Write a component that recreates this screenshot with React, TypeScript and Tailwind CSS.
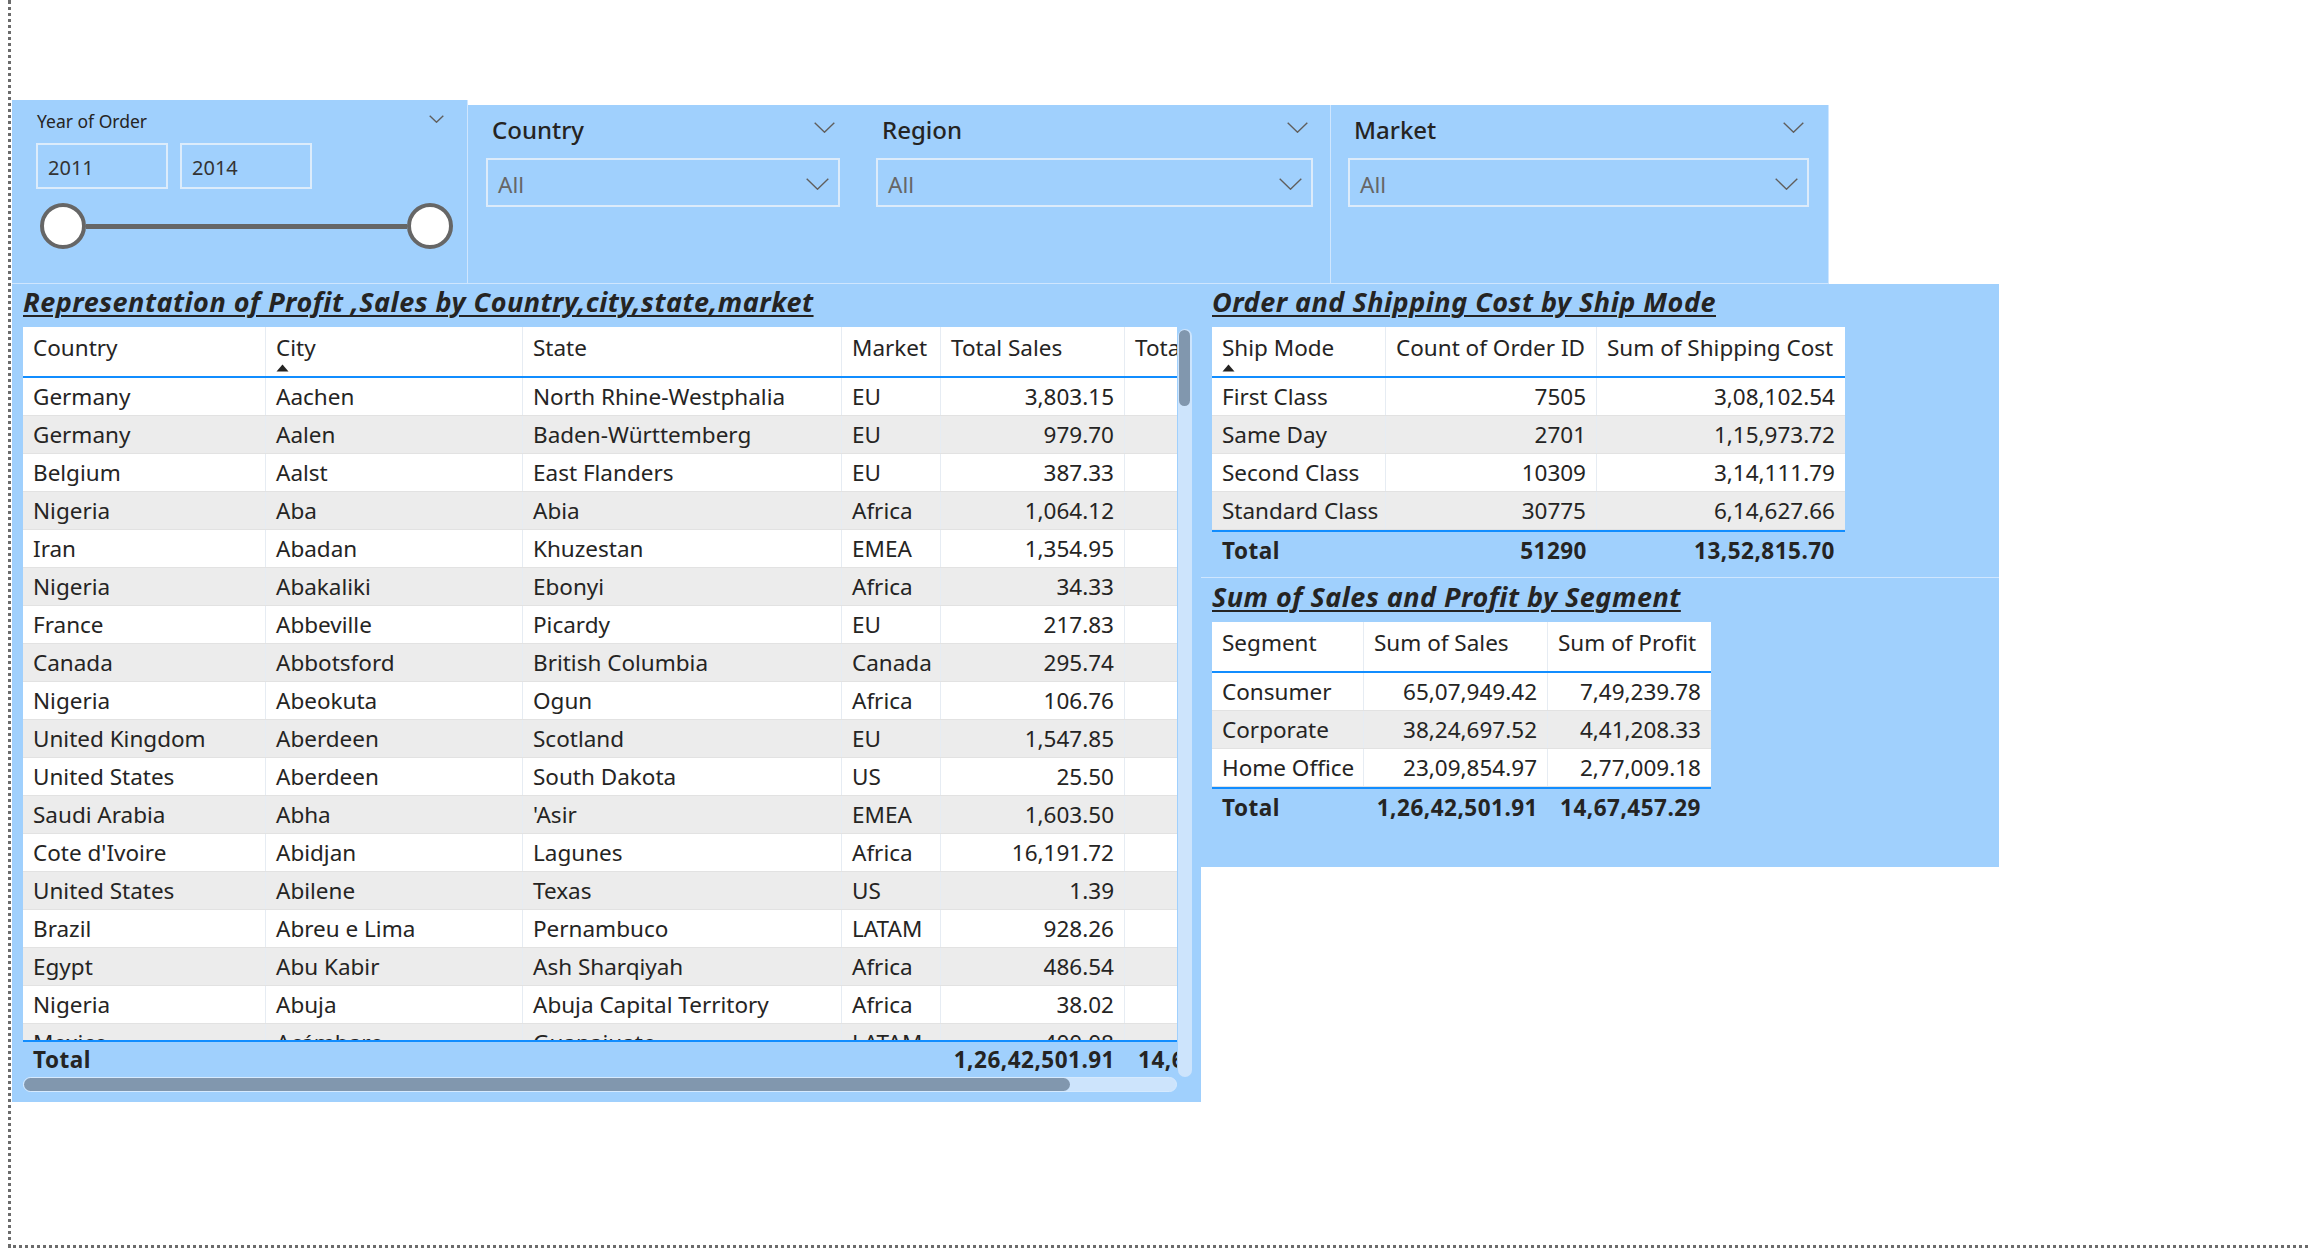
import React from "react";

type Row = [string, string, string, string, string];

const ROWS: Row[] = [
  ["Germany", "Aachen", "North Rhine-Westphalia", "EU", "3,803.15"],
  ["Germany", "Aalen", "Baden-Württemberg", "EU", "979.70"],
  ["Belgium", "Aalst", "East Flanders", "EU", "387.33"],
  ["Nigeria", "Aba", "Abia", "Africa", "1,064.12"],
  ["Iran", "Abadan", "Khuzestan", "EMEA", "1,354.95"],
  ["Nigeria", "Abakaliki", "Ebonyi", "Africa", "34.33"],
  ["France", "Abbeville", "Picardy", "EU", "217.83"],
  ["Canada", "Abbotsford", "British Columbia", "Canada", "295.74"],
  ["Nigeria", "Abeokuta", "Ogun", "Africa", "106.76"],
  ["United Kingdom", "Aberdeen", "Scotland", "EU", "1,547.85"],
  ["United States", "Aberdeen", "South Dakota", "US", "25.50"],
  ["Saudi Arabia", "Abha", "'Asir", "EMEA", "1,603.50"],
  ["Cote d'Ivoire", "Abidjan", "Lagunes", "Africa", "16,191.72"],
  ["United States", "Abilene", "Texas", "US", "1.39"],
  ["Brazil", "Abreu e Lima", "Pernambuco", "LATAM", "928.26"],
  ["Egypt", "Abu Kabir", "Ash Sharqiyah", "Africa", "486.54"],
  ["Nigeria", "Abuja", "Abuja Capital Territory", "Africa", "38.02"],
  ["Mexico", "Acámbaro", "Guanajuato", "LATAM", "400.08"],
];

const SHIP = [
  ["First Class", "7505", "3,08,102.54"],
  ["Same Day", "2701", "1,15,973.72"],
  ["Second Class", "10309", "3,14,111.79"],
  ["Standard Class", "30775", "6,14,627.66"],
];

const SEGMENTS = [
  ["Consumer", "65,07,949.42", "7,49,239.78"],
  ["Corporate", "38,24,697.52", "4,41,208.33"],
  ["Home Office", "23,09,854.97", "2,77,009.18"],
];

// country | city | state | market | sales | profit (profit runs past the clip)
const MAIN_COLS = "grid grid-cols-[243px_257px_319px_99px_184px_164px]";

function Chevron({ w, h }: { w: number; h: number }) {
  return (
    <svg width={w} height={h} viewBox={`0 0 ${w} ${h}`} className="block shrink-0">
      <path d={`M0.7 0.7 L${w / 2} ${h - 0.8} L${w - 0.7} 0.7`} fill="none" stroke="#605e5c" strokeWidth="1.4" />
    </svg>
  );
}

function SortArrow() {
  return (
    <svg width="13" height="8" viewBox="0 0 13 8" className="mt-[1px] block">
      <path d="M6.5 0.5 L12.5 7.5 L0.5 7.5 Z" fill="#252423" />
    </svg>
  );
}

function DropSlicer({ title, className }: { title: string; className: string }) {
  return (
    <div className={className}>
      <div className="flex h-[40px] justify-between pt-[10px]">
        <span className="ml-[6px] text-[24px] font-medium leading-[30px] text-[#252423]">{title}</span>
        <span className="mr-[5px] mt-[7px]">
          <Chevron w={21} h={11} />
        </span>
      </div>
      <div className="mt-[13px] flex h-[49px] items-center justify-between border-2 border-[#dcebfa] pl-[10px] pr-[9px]">
        <span className="pt-[4px] text-[22.5px] leading-[30px] text-[#666666]">All</span>
        <span className="pt-[2px]">
          <Chevron w={23} h={12} />
        </span>
      </div>
    </div>
  );
}

function VisualTitle({ text, className }: { text: string; className: string }) {
  return (
    <div className={className}>
      <span className="whitespace-nowrap text-[27px] font-bold italic leading-[32px] tracking-[0.5px] text-[#252423] underline decoration-[2px] underline-offset-[3px]">
        {text}
      </span>
    </div>
  );
}

function SummaryTable({
  cols,
  width,
  headers,
  rows,
  total,
  sortFirst,
}: {
  cols: string;
  width: string;
  headers: string[];
  rows: string[][];
  total: string[];
  sortFirst?: boolean;
}) {
  return (
    <div className={width}>
      <div className={`${cols} h-[51px] border-b-2 border-[#118dff] bg-white`}>
        {headers.map((h, i) => (
          <div key={h} className="whitespace-nowrap border-r border-[#e6ecf3] px-[10px] pt-[6px] last:border-r-0">
            <div className="leading-[30px]">{h}</div>
            {sortFirst && i === 0 && <SortArrow />}
          </div>
        ))}
      </div>
      {rows.map((r, i) => (
        <div
          key={r[0]}
          className={`${cols} h-[38px] border-b border-[#e2e2e2] last:border-b-0 ${i % 2 ? "bg-[#ececec]" : "bg-white"}`}
        >
          {r.map((c, j) => (
            <div
              key={j}
              className={`flex items-center whitespace-nowrap border-r border-[#e6ecf3] px-[10px] last:border-r-0 ${j > 0 ? "justify-end" : ""}`}
            >
              {c}
            </div>
          ))}
        </div>
      ))}
      <div className={`${cols} h-[40px] border-t-2 border-[#118dff] font-bold tracking-[0.5px]`}>
        {total.map((c, j) => (
          <div key={j} className={`flex items-center whitespace-nowrap px-[10px] ${j > 0 ? "justify-end" : ""}`}>
            {c}
          </div>
        ))}
      </div>
    </div>
  );
}

export default function App() {
  return (
    <div className="h-[1252px] w-[2308px] overflow-hidden bg-white font-['Noto_Sans',sans-serif] text-[22.5px] text-[#252423]">
      <div className="ml-[8px] h-[1248px] border-b-[3px] border-l-[3px] border-dotted border-[#6b6b6b] pl-[1px] pt-[100px]">
        {/* slicers */}
        <div className="flex items-start">
          <div className="h-[184px] w-[456px] border-b border-r border-[#cfe6fe] bg-[#a0d0fd]">
            <div className="flex h-[33px] justify-between pl-[25px] pr-[23px] pt-[9px]">
              <span className="text-[17.5px] leading-[24px]">Year of Order</span>
              <span className="mt-[6px]">
                <Chevron w={15} h={8} />
              </span>
            </div>
            <div className="ml-[24px] mt-[10px] flex gap-[12px]">
              {["2011", "2014"].map((y) => (
                <div key={y} className="flex h-[46px] w-[132px] items-center border-2 border-[#dcecfb] pl-[10px] pt-[3px] text-[20px] text-[#333333]">
                  {y}
                </div>
              ))}
            </div>
            <div className="ml-[28px] mt-[14px] flex w-[413px] items-center">
              <div className="h-[46px] w-[46px] shrink-0 rounded-full border-[4px] border-[#666666] bg-white" />
              <div className="h-[5px] flex-1 bg-[#666666]" />
              <div className="h-[46px] w-[46px] shrink-0 rounded-full border-[4px] border-[#666666] bg-white" />
            </div>
          </div>

          <div className="mt-[5px] flex h-[179px] w-[1361px] border-b border-r border-[#cfe6fe] bg-[#a0d0fd]">
            <DropSlicer title="Country" className="w-[390px] px-[18px]" />
            <DropSlicer title="Region" className="w-[473px] border-r border-[#cfe6fe] pl-[18px] pr-[17px]" />
            <DropSlicer title="Market" className="flex-1 pl-[17px] pr-[19px]" />
          </div>
        </div>

        <div className="flex items-start">
          {/* main table */}
          <div className="h-[818px] w-[1189px] bg-[#a0d0fd] pl-[11px]">
            <VisualTitle text="Representation of Profit ,Sales by Country,city,state,market" className="h-[43px] pt-[2px]" />
            <div className="flex items-start">
              <div className="w-[1154px] overflow-hidden">
                <div className={`${MAIN_COLS} h-[51px] border-b-2 border-[#118dff] bg-white`}>
                  {["Country", "City", "State", "Market", "Total Sales", "Total Profit"].map((h) => (
                    <div key={h} className="whitespace-nowrap border-r border-[#e6ecf3] px-[10px] pt-[6px]">
                      <div className="leading-[30px]">{h}</div>
                      {h === "City" && <SortArrow />}
                    </div>
                  ))}
                </div>
                <div className="h-[662px] overflow-hidden">
                  {ROWS.map((r, i) => (
                    <div
                      key={i}
                      className={`${MAIN_COLS} h-[38px] border-b border-[#e2e2e2] ${i % 2 ? "bg-[#ececec]" : "bg-white"}`}
                    >
                      {r.map((c, j) => (
                        <div
                          key={j}
                          className={`flex items-center whitespace-nowrap border-r border-[#e6ecf3] px-[10px] ${j === 4 ? "justify-end" : ""}`}
                        >
                          {c}
                        </div>
                      ))}
                      <div className="border-r border-[#e6ecf3]" />
                    </div>
                  ))}
                </div>
                <div className={`${MAIN_COLS} h-[37px] border-t-2 border-[#118dff] font-bold tracking-[0.5px]`}>
                  <div className="flex items-center px-[10px]">Total</div>
                  <div />
                  <div />
                  <div />
                  <div className="flex items-center justify-end px-[10px]">1,26,42,501.91</div>
                  <div className="flex items-center justify-end whitespace-nowrap px-[10px]">14,67,457.29</div>
                </div>
                <div className="h-[15px] rounded-full border border-[#d6eafe] bg-[#cde4fc]">
                  <div className="h-full w-[1046px] rounded-full bg-[#8197ae]" />
                </div>
              </div>
              <div className="ml-[1px] mt-[2px] h-[748px] w-[14px] rounded-full bg-[#cde4fc] pl-[1px] pt-[1px]">
                <div className="h-[76px] w-[11px] rounded-full bg-[#8197ae]" />
              </div>
            </div>
          </div>

          {/* right visuals */}
          <div className="flex h-[583px] w-[798px] flex-col bg-[#a0d0fd]">
            <div className="h-[294px] border-b border-[#cfe6fe] pl-[11px]">
              <VisualTitle text="Order and Shipping Cost by Ship Mode" className="h-[43px] pt-[2px]" />
              <SummaryTable
                cols="grid grid-cols-[174px_211px_248px]"
                width="w-[633px]"
                headers={["Ship Mode", "Count of Order ID", "Sum of Shipping Cost"]}
                rows={SHIP}
                total={["Total", "51290", "13,52,815.70"]}
                sortFirst
              />
            </div>
            <div className="pl-[11px]">
              <VisualTitle text="Sum of Sales and Profit by Segment" className="h-[44px] pt-[3px]" />
              <SummaryTable
                cols="grid grid-cols-[152px_184px_163px]"
                width="w-[499px]"
                headers={["Segment", "Sum of Sales", "Sum of Profit"]}
                rows={SEGMENTS}
                total={["Total", "1,26,42,501.91", "14,67,457.29"]}
              />
            </div>
          </div>
        </div>
      </div>
    </div>
  );
}
